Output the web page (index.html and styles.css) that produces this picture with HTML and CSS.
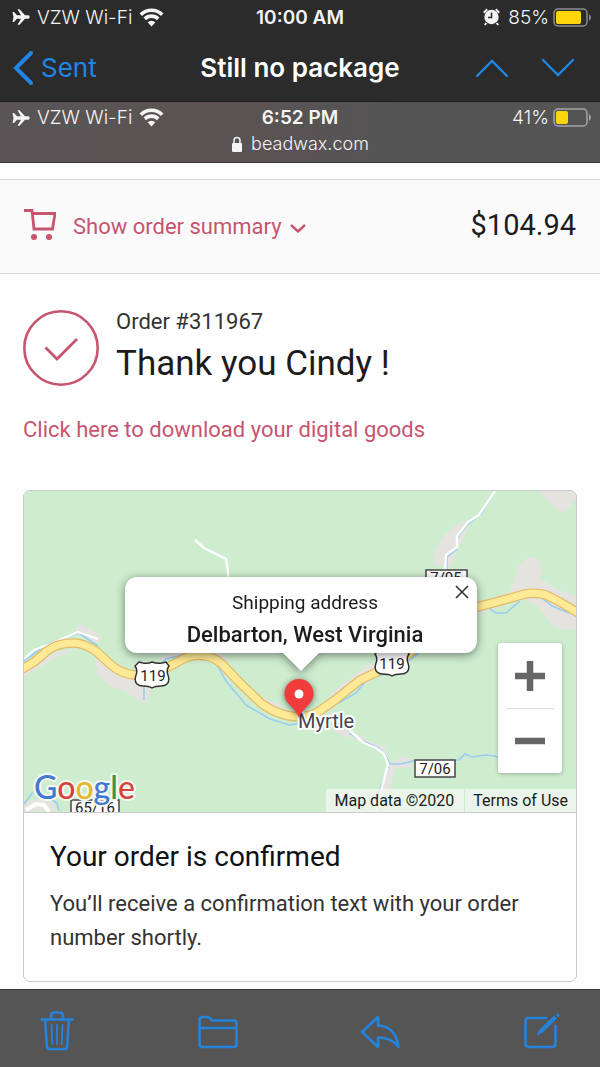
FILE: index.html
```html
<!DOCTYPE html>
<html lang="en">
<head>
<meta charset="utf-8">
<meta name="viewport" content="width=device-width, initial-scale=1">
<title>Still no package</title>
<link rel="stylesheet" href="styles.css">
</head>
<body>
<svg class="symbols" aria-hidden="true">
  <symbol id="plane" viewBox="0 0 18 16"><path d="M.5 3H2l3 3.300h4L5.500.3h2L13 6.300h3.200c2 .5 2 2.900 0 3.400H13l-5.500 6h-2L9 9.700H5L2 13H.5l1-5z"/></symbol>
  <symbol id="wifi" viewBox="0 0 25 19"><path d="M12.500 18.500 8.600 14.300a5.600 5.600 0 0 1 7.800 0z"/><path d="M5.800 11.900a9.500 9.500 0 0 1 13.400 0M1.800 7.700a15.200 15.200 0 0 1 21.400 0" fill="none" stroke="currentColor" stroke-width="3.600" transform="translate(0 -1)"/></symbol>
  <symbol id="alarm" viewBox="0 0 17 18"><circle cx="8.500" cy="9" r="7.200"/><path d="m.8 4.800 3.400-3.600M16.200 4.800l-3.400-3.600M3.300 15l-1.500 2M13.700 15l1.500 2" stroke="currentColor" stroke-width="2"/><path d="M8.500 4.500V9.500H5" fill="none" stroke="#2b2b2b" stroke-width="1.500"/></symbol>
</svg>

<header class="mail-header">
  <div class="status">
    <div class="carrier"><svg class="plane"><use href="#plane"/></svg><span>VZW Wi-Fi</span><svg class="wifi"><use href="#wifi"/></svg></div>
    <time class="clock">10:00 AM</time>
    <div class="power"><svg class="alarm"><use href="#alarm"/></svg><span>85%</span>
      <svg class="battery" viewBox="0 0 39 19"><rect x="1" y="1" width="33" height="17" rx="4" fill="none" stroke="#8d8d8d" stroke-width="1.500"/><rect x="3" y="3" width="25" height="13" rx="2" fill="#fdd60a"/><path d="M36 6q4 3.500 0 7z" fill="#8d8d8d"/></svg></div>
  </div>
  <nav class="titlebar">
    <button class="back"><svg viewBox="0 0 22 34"><path d="M19 2 4 17l15 15" fill="none" stroke="currentColor" stroke-width="4" stroke-linecap="round"/></svg>Sent</button>
    <h1>Still no package</h1>
    <div class="steps">
      <button aria-label="Previous message"><svg viewBox="0 0 34 20"><path d="M2 18 17 3l15 15" fill="none" stroke="currentColor" stroke-width="2.400" stroke-linecap="round"/></svg></button>
      <button aria-label="Next message"><svg viewBox="0 0 34 20"><path d="m2 2 15 15L32 2" fill="none" stroke="currentColor" stroke-width="2.400" stroke-linecap="round"/></svg></button>
    </div>
  </nav>
</header>

<section class="browser-header">
  <div class="status">
    <div class="carrier"><svg class="plane"><use href="#plane"/></svg><span>VZW Wi-Fi</span><svg class="wifi"><use href="#wifi"/></svg></div>
    <time class="clock">6:52 PM</time>
    <div class="power"><span>41%</span>
      <svg class="battery" viewBox="0 0 39 19"><rect x="1" y="1" width="33" height="17" rx="4" fill="none" stroke="#a5a5a5" stroke-width="1.500"/><rect x="3" y="3" width="12" height="13" rx="2" fill="#fdd60a"/><path d="M36 6q4 3.500 0 7z" fill="#a5a5a5"/></svg></div>
  </div>
  <div class="site"><svg viewBox="0 0 12 16"><rect x="1" y="7" width="10" height="9" rx="1" fill="currentColor"/><path d="M3 8V4.500a3 3 0 0 1 6 0V8" fill="none" stroke="currentColor" stroke-width="1.500"/></svg>beadwax.com</div>
</section>

<main>
  <section class="summary">
    <button class="summary-toggle">
      <svg class="cart" viewBox="0 0 32 32"><path d="M0 1.500h8L10 20h18.500L31 4.500H8.500" fill="none" stroke="currentColor" stroke-width="2.800"/><circle cx="10" cy="28" r="3" fill="currentColor"/><circle cx="25" cy="28" r="3" fill="currentColor"/></svg>
      <span>Show order summary</span>
      <svg class="chevron" viewBox="0 0 16 9"><path d="m1 1 7 6.500L15 1" fill="none" stroke="currentColor" stroke-width="2.400"/></svg>
    </button>
    <strong class="total">$104.94</strong>
  </section>

  <section class="order">
    <div class="thanks">
      <svg class="check" viewBox="0 0 76 76"><circle cx="38" cy="38" r="36.700" fill="none" stroke="currentColor" stroke-width="2.600"/><path d="m22.500 37.500 11.500 11.500 20-20" fill="none" stroke="currentColor" stroke-width="2.800"/></svg>
      <div><p class="number">Order #311967</p><h2>Thank you Cindy !</h2></div>
    </div>
    <a class="download" href="#">Click here to download your digital goods</a>

    <article class="card">
      <div class="map">
        <svg class="terrain" viewBox="24 491 552 321" preserveAspectRatio="xMidYMid slice" role="img" aria-label="Map of Myrtle, West Virginia">
          <path fill="#ceedcf" d="M-300 400h1200v500H-300z"/>
          <g fill="#e4e3df">
            <path d="M540 491h36v7l-8 12-8 2-20-19zM433 565l1-12 10-18 16-13 12-2-9 18-12 28zM477 604l33-12 8-26 10-9 10 2 4 7-2 12 15 10 21 8v33l-12 1-13-6-13-18-20-10-19 11-22 8z"/>
            <path d="m79 623 23 13-5 7-23-10zM95 660l10-4 20 15 28 1 2 10-10 22-11-7-14-8-7-1-16-14zM24 671l20-14 15-6 20-2-22 8-33 20zM155 662l14-10 15-2v4zM190 651l30 2 12 10-15-5zM255 695l29 11-7 4zM318 707l19-18 30-24 10-2-9 20-20 11-22 20zM330 730l19-1 20 12 15 5 7 17 12-7 8 2 1 9-17 2-4 17-4 22h-15l17-45-9-13-13-7-7-1zM24 801l15-2 13 3 6 9H24z"/>
          </g>
          <g fill="none" stroke="#9acdf0" stroke-width="1.600">
            <path d="m494 493-13 21-14 11-10 13v11l-10 8v13M489 608l7 5h10l14-12M542 598l10 8 17 7M24 661l11-8 12-9 32-11 19 13M144 678v22M157 667l9-8 20-5M204 657l12 6 10 18 20 24 24 14 19 6 12-2M339 703l17-10 14-17M375 676l16-2 28-21M349 733l8 5 21 10 7 6 5 10 11 0 12-3h35l11-1 6-6 7 3 14-2 8 1 16 4M388 767l-12 33M24 804l9-12M50 798l7 5 2 8"/>
          </g>
          <g fill="none" stroke="#fff" stroke-linejoin="round">
            <path stroke-width="2.400" d="m195 540 9 8 22 11 2 12v10M495 491l-16 24-11 7-11 14v11l-11 8-1 20M350 731l14 12 12 5 8 6 4 10-12 47"/>
            <path stroke-width="2" d="m24 659 10-9 16-6 28-12 20 7"/>
            <path stroke-width="4" d="m26 810 10-6 8 1 5 7"/>
          </g>
          <g fill="none" stroke-linejoin="round">
            <path stroke="#e3bb66" stroke-width="9.600" d="M10 675L24 668L34 662L47 651Q57 643 73 643Q85 643 97 652L110 664Q121 674 135 675Q153 676 170 666L185 658Q197 653 210 657Q216 659 222 664L240 683L262 704Q279 716 298 717Q309 717 318 712L335 700L360 680L375 673L400 660L420 645L450 622L477 607L500 601L525 594Q536 592 546 595L560 602L590 620"/>
            <path stroke="#fde996" stroke-width="7.200" d="M10 675L24 668L34 662L47 651Q57 643 73 643Q85 643 97 652L110 664Q121 674 135 675Q153 676 170 666L185 658Q197 653 210 657Q216 659 222 664L240 683L262 704Q279 716 298 717Q309 717 318 712L335 700L360 680L375 673L400 660L420 645L450 622L477 607L500 601L525 594Q536 592 546 595L560 602L590 620"/>
          </g>
          <g class="plates">
            <rect x="426" y="570" width="41" height="20"/><text x="446" y="583">7/05</text>
            <rect x="415" y="760" width="40" height="17"/><text x="435" y="774">7/06</text>
            <rect x="71" y="800" width="48" height="20"/><text x="95" y="813">65/16</text>
          </g>
          <g class="shields">
            <path d="M139 662l4 1q5 1 9-1 5 2 10 1l4-1 3 4q-3 4-1 9 2 6-1 9-2 2-6 2-6 0-9 2-3-2-9-2-4 0-6-2-3-3-1-9 2-5-1-9z"/><text x="153" y="681">119</text>
            <path d="M379 650l4 1q5 1 9-1 5 2 10 1l4-1 3 4q-3 4-1 9 2 6-1 9-2 2-6 2-6 0-9 2-3-2-9-2-4 0-6-2-3-3-1-9 2-5-1-9z"/><text x="392" y="669">119</text>
          </g>
          <text class="town" x="298" y="728">Myrtle</text>
          <path class="pin" d="M299 718c-3-8-7-10-11-15a14.500 14.500 0 1 1 22 0c-4 5-8 7-11 15z"/>
          <circle cx="299" cy="694" r="4.500" fill="#fff"/>
          <text class="google" x="34" y="799"><tspan fill="#4378d0">G</tspan><tspan fill="#d3453b">o</tspan><tspan fill="#e6b62c">o</tspan><tspan fill="#4378d0">g</tspan><tspan fill="#369653">l</tspan><tspan fill="#d3453b">e</tspan></text>
        </svg>
        <div class="popup">
          <p>Shipping address</p><strong>Delbarton, West Virginia</strong>
          <button class="close" aria-label="Close"><svg viewBox="0 0 14 14"><path d="m1 1 12 12M13 1 1 13" stroke="currentColor" stroke-width="1.600"/></svg></button>
        </div>
        <div class="zoom">
          <button aria-label="Zoom in"><svg viewBox="0 0 30 30"><path d="M0 15h30M15 0v30" stroke="currentColor" stroke-width="6.500"/></svg></button>
          <button aria-label="Zoom out"><svg viewBox="0 0 30 30"><path d="M0 15h30" stroke="currentColor" stroke-width="6.500"/></svg></button>
        </div>
        <div class="credits"><span>Map data ©2020</span><a href="#">Terms of Use</a></div>
      </div>
      <div class="confirmed">
        <h3>Your order is confirmed</h3>
        <p>You’ll receive a confirmation text with your order number shortly.</p>
      </div>
    </article>
  </section>
</main>

<footer class="toolbar">
  <button aria-label="Delete"><svg viewBox="0 0 40 40"><path d="M4.500 8.500h31M8 8.500 10 36q.3 2 2.500 2h15q2.200 0 2.500-2L32 8.500M14 8V5q0-3.500 3.500-3.500h5q3.500 0 3.500 3.500v3"/><path stroke-width="1.800" d="m14.500 14 .7 19M20 14v19M25.500 14l-.7 19"/></svg></button>
  <button aria-label="Move to folder"><svg viewBox="0 0 40 40"><path d="M1.500 33V9q0-3 3-3H9q2 0 3.500 2l2 1.500H35.500q3 0 3 3v20.500q0 3-3 3h-31q-3 0-3-3zM1.500 17h37"/></svg></button>
  <button aria-label="Reply"><svg viewBox="0 0 40 40"><path d="M2 21 18 6v8.500q18 1 20.500 21.500-6-9-20.500-9.500V36z"/></svg></button>
  <button aria-label="Compose"><svg viewBox="0 0 40 40"><path d="M25 7H8q-3.500 0-3.500 3.500v22Q4.500 36 8 36h23q3.500 0 3.500-3.500V15"/><path stroke-width="1" d="m16.500 23.500 2-4.500L33 5l2.500 2.500L21 21.500zM35.500 3.500l1-1 2 2-1 1z" fill="currentColor"/></svg></button>
</footer>
</body>
</html>
```
FILE: styles.css
```css
* { box-sizing: border-box; }
body {
  margin: 0;
  min-height: 100vh;
  display: flex;
  flex-direction: column;
  background: #fefefe;
  color: #1c1c1c;
  font-family: Roboto, "Liberation Sans", sans-serif;
}
h1, h2, h3, p { margin: 0; font-weight: 400; }
button { padding: 0; border: 0; background: none; color: inherit; font: inherit; }
a { color: inherit; text-decoration: none; }
svg { display: block; flex: none; }
.symbols { position: absolute; width: 0; height: 0; }

.mail-header, .browser-header { color: #f4f4f4; font-family: Inter, "Liberation Sans", sans-serif; }
.mail-header { background: #2b2b2b; }
.status {
  display: grid;
  grid-template-columns: 1fr auto 1fr;
  align-items: center;
  height: 34px;
  padding: 0 8px;
  font-size: 19px;
}
.carrier, .power { display: flex; align-items: center; font-weight: 300; }
.carrier { gap: 7px; padding-left: 4px; }
.power { gap: 4px; justify-content: flex-end; }
.plane { width: 18px; height: 16px; fill: currentColor; }
.wifi { width: 25px; height: 19px; fill: currentColor; }
.alarm { width: 17px; height: 18px; margin-right: 4px; fill: currentColor; }
.battery { width: 39px; height: 19px; }
.clock { font-weight: 600; }
.titlebar {
  display: grid;
  grid-template-columns: 1fr auto 1fr;
  align-items: center;
  height: 67px;
  padding: 0 12px;
}
.titlebar button { color: #1e86e4; }
.back { display: flex; align-items: center; gap: 7px; font-size: 26px; justify-self: start; }
.back svg { width: 22px; height: 34px; }
.titlebar h1 { font-size: 26px; font-weight: 600; color: #fff; }
.steps { display: flex; gap: 32px; justify-content: flex-end; padding-right: 13px; }
.steps svg { width: 34px; height: 20px; }

.browser-header {
  height: 62px;
  border-top: 1px solid #1c1c1c;
  border-bottom: 1px solid #3a3a3a;
  background: linear-gradient(90deg, #585455, #5b5354 35%, #545454 70%);
}
.browser-header .status { height: 31px; }
.site { display: flex; justify-content: center; align-items: center; gap: 8px; font-size: 18px; line-height: 22px; font-weight: 300; }
.site svg { width: 12px; height: 16px; }

main { flex: 1; padding-top: 16px; }
.summary {
  display: flex;
  justify-content: space-between;
  align-items: center;
  height: 95px;
  padding: 0 24px 4px;
  border: solid #d9d9d9;
  border-width: 1px 0;
  background: #fafafa;
}
.summary-toggle { display: flex; align-items: center; color: #c75570; font-size: 22px; }
.summary-toggle span { padding-top: 4px; }
.cart { width: 32px; height: 32px; margin-right: 17px; }
.chevron { width: 16px; height: 9px; margin: 8px 0 0 8px; }
.total { font-size: 29px; font-weight: 400; }

.order { padding: 32px 23px 7px; }
.thanks { display: flex; align-items: center; gap: 17px; height: 84px; }
.check { width: 76px; height: 76px; color: #c75570; }
.number { font-size: 22px; line-height: 32px; color: #333; }
.thanks h2 { font-size: 35px; line-height: 52px; }
.download { display: block; margin-top: 24px; font-size: 22px; line-height: 32px; color: #c75570; }
.card { margin-top: 44px; border: 1px solid #cbcbcb; border-radius: 7px; overflow: hidden; }
.map { position: relative; height: 322px; border-bottom: 1px solid #cbcbcb; overflow: hidden; }
.terrain { width: 100%; height: 100%; }
.plates rect { fill: #fff; stroke: #454545; stroke-width: 1.500px; }
.plates text, .shields text { font-size: 15px; text-anchor: middle; fill: #222; }
.shields path { fill: #fff; stroke: #333; stroke-width: 1.500px; }
.town { font-size: 20px; fill: #45454c; stroke: #fff; stroke-width: 4px; paint-order: stroke; stroke-linejoin: round; }
.pin { fill: #f23b3b; filter: drop-shadow(0 1px 3px #0008); }
.google { font: 500 32px Lato, Roboto, sans-serif; stroke: #f3f9f2; stroke-width: 4px; paint-order: stroke; stroke-linejoin: round; }
.popup {
  position: absolute;
  top: 86px;
  left: 50%;
  width: 352px;
  margin-left: -175px;
  padding: 10px 0 2px;
  border-radius: 12px;
  background: #fefefe;
  text-align: center;
  line-height: 32px;
  filter: drop-shadow(0 2px 5px #0007);
}
.popup::after {
  content: "";
  position: absolute;
  top: 100%;
  left: 50%;
  margin-left: -18px;
  border: solid transparent;
  border-width: 18px 18px 0;
  border-top-color: #fefefe;
}
.popup p, .popup strong { display: block; padding-left: 8px; }
.popup p { font-size: 19px; }
.popup strong { font-size: 22px; font-weight: 500; }
.close { position: absolute; top: 8px; right: 8px; color: #333; }
.close svg { width: 14px; height: 14px; }
.zoom {
  position: absolute;
  right: 14px;
  bottom: 39px;
  width: 64px;
  padding: 0 8px;
  border-radius: 3px;
  background: #fefefe;
  box-shadow: 0 1px 4px #0004;
  color: #666;
}
.zoom button { display: flex; width: 100%; height: 65px; align-items: center; justify-content: center; }
.zoom button + button { border-top: 1px solid #ddd; }
.zoom svg { width: 30px; height: 30px; }
.credits { position: absolute; right: 0; bottom: 0; display: flex; gap: 1px; font-size: 16px; line-height: 23px; }
.credits > * { padding: 0 8px; background: #f1f5f0cc; }
.credits span { padding-right: 10px; }
.confirmed { padding: 26px; }
.confirmed h3 { font-size: 28px; line-height: 36px; color: #111; }
.confirmed p { margin-top: 12px; font-size: 22px; line-height: 34px; color: #333; }

.toolbar {
  display: flex;
  justify-content: space-between;
  align-items: center;
  height: 78px;
  padding: 4px 39px 0 37px;
  border-top: 1px solid #353a35;
  background: #555;
  color: #2583dc;
}
.toolbar svg { width: 40px; height: 40px; fill: none; stroke: currentColor; stroke-width: 2.600px; stroke-linejoin: round; stroke-linecap: round; }
```
